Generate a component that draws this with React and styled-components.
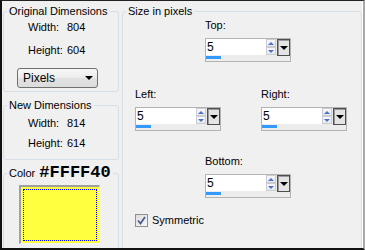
import React from "react";
import styled, { createGlobalStyle } from "styled-components";

const GlobalStyle = createGlobalStyle`
  body {
    margin: 0;
    font-family: "Liberation Sans", Arial, sans-serif;
    font-size: 11px;
    color: #000;
  }
`;

const Frame = styled.div`
  width: 365px;
  height: 250px;
  box-sizing: border-box;
  overflow: hidden;
  background: #f0f0f0;
  border-left: 2px solid #111;
  border-top: 1px solid #222;
  border-bottom: 2px solid #111;
  border-right: 2px solid #a9a9a9;
  box-shadow: inset -1px 0 0 #fff;
  padding-left: 1px;
  display: grid;
  grid-template-columns: 116px 240px;
  column-gap: 3px;
  align-items: start;
`;

const Column = styled.div`
  display: flex;
  flex-direction: column;
`;

const Group = styled.fieldset`
  margin: ${(p) => p.$top || 0}px 0 0 0;
  padding: ${(p) => p.$pad || "0"};
  border: 1px solid #d5dfe5;
  border-radius: 3px;
  min-width: 0;
  height: ${(p) => (p.$height ? `${p.$height}px` : "auto")};
`;

const Legend = styled.legend`
  margin-left: 3px;
  padding: 0 2px;
  line-height: 13px;
  font-size: 11px;
  white-space: nowrap;
`;

const ColorLegend = styled(Legend)`
  line-height: 20px;
  padding: 0 2px;
`;

const Hex = styled.span`
  font-family: "Liberation Mono", "Courier New", monospace;
  font-weight: bold;
  font-size: 17px;
  margin-left: 4px;
`;

const InfoGrid = styled.div`
  display: grid;
  grid-template-columns: 39px auto;
  row-gap: ${(p) => p.$gap}px;
  padding-left: 24px;
  margin-top: ${(p) => p.$top}px;
  line-height: 14px;
`;

const Combo = styled.div`
  width: 81px;
  height: 20px;
  box-sizing: border-box;
  margin: 11px 0 3px 13px;
  border: 1px solid #707070;
  border-radius: 3px;
  background: linear-gradient(#f7f7f7, #ececec 50%, #e2e2e2 50%, #dcdcdc);
  display: flex;
  align-items: center;
  justify-content: space-between;
  padding: 0 4px 0 5px;
  font-size: 12px;
`;

const Caret = styled.span`
  width: 0;
  height: 0;
  border-left: ${(p) => p.$w}px solid transparent;
  border-right: ${(p) => p.$w}px solid transparent;
  border-top: ${(p) => p.$h}px solid ${(p) => p.$color};
  border-bottom: none;
  ${(p) =>
    p.$up &&
    `border-top: none; border-bottom: ${p.$h}px solid ${p.$color};`}
`;

const Swatch = styled.div`
  width: 81px;
  height: 59px;
  box-sizing: border-box;
  margin: 2px 0 0 15px;
  border-top: 2px solid #a0a0a0;
  border-left: 2px solid #a0a0a0;
  border-right: 1px solid #f4f4f4;
  border-bottom: 1px solid #f4f4f4;
  background: #ffff40;
  padding: 2px;
`;

const Focus = styled.div`
  height: 100%;
  box-sizing: border-box;
  border: 1px dotted #0000ff;
`;

const Pane = styled.div`
  display: flex;
  flex-direction: column;
`;

const Field = styled.div`
  display: flex;
  flex-direction: column;
  margin-left: ${(p) => p.$left || 0}px;
  margin-top: ${(p) => p.$top || 0}px;
`;

const Label = styled.div`
  line-height: 14px;
  margin-bottom: 6px;
`;

const PairRow = styled.div`
  display: flex;
  gap: 40px;
  margin-left: 12px;
  margin-top: 25px;
`;

const SpinBox = styled.div`
  width: 86px;
  height: 24px;
  box-sizing: border-box;
  border: 1px solid #b3b3b3;
  background: #ececec;
  display: flex;
  flex-direction: column;
`;

const SpinTop = styled.div`
  display: flex;
  height: 16px;
`;

const Value = styled.div`
  flex: 1;
  background: #fff;
  font-size: 12px;
  line-height: 16px;
  padding-left: 1px;
`;

const Arrows = styled.div`
  width: 10px;
  display: flex;
  flex-direction: column;
  background: #fff;
`;

const ArrowBtn = styled.div`
  flex: 1;
  box-sizing: border-box;
  border: 1px solid #c9ccd4;
  background: linear-gradient(#f8f8f8, #e9e9ec);
  display: flex;
  align-items: center;
  justify-content: center;
`;

const DropBtn = styled.div`
  width: 13px;
  height: 17px;
  box-sizing: border-box;
  margin-left: 1px;
  border: 1px solid #4e4e4e;
  box-shadow: inset 1px 1px 0 #9a9a9a;
  background: #e4e4e4;
  display: flex;
  align-items: center;
  justify-content: center;
`;

const Track = styled.div`
  height: 6px;
  padding-top: 1px;
  box-sizing: border-box;
`;

const Bar = styled.div`
  height: 3px;
  background: #3399ff;
`;

const CheckRow = styled.label`
  display: flex;
  align-items: center;
  gap: 4px;
  margin: 15px 0 0 12px;
  line-height: 14px;
`;

const Box = styled.span`
  width: 13px;
  height: 13px;
  box-sizing: border-box;
  border: 1px solid #8f8f8f;
  background: linear-gradient(135deg, #dcdcdc, #f8f8f8);
  display: flex;
  align-items: center;
  justify-content: center;
`;

const Spin = ({ value, level = 15 }) => (
  <SpinBox>
    <SpinTop>
      <Value>{value}</Value>
      <Arrows>
        <ArrowBtn>
          <Caret $up $w={3} $h={3} $color="#4f72c8" />
        </ArrowBtn>
        <ArrowBtn>
          <Caret $w={3} $h={3} $color="#4f72c8" />
        </ArrowBtn>
      </Arrows>
      <DropBtn>
        <Caret $w={4} $h={4} $color="#000" />
      </DropBtn>
    </SpinTop>
    <Track>
      <Bar style={{ width: level }} />
    </Track>
  </SpinBox>
);

export default function App() {
  return (
    <>
      <GlobalStyle />
      <Frame>
        <Column>
          <Group $top={4}>
            <Legend>Original Dimensions</Legend>
            <InfoGrid $gap={9} $top={2}>
              <span>Width:</span>
              <span>804</span>
              <span>Height:</span>
              <span>604</span>
            </InfoGrid>
            <Combo>
              Pixels
              <Caret $w={4} $h={4} $color="#000" />
            </Combo>
          </Group>
          <Group $top={7} $pad="0 0 9px 0">
            <Legend>New Dimensions</Legend>
            <InfoGrid $gap={6} $top={4}>
              <span>Width:</span>
              <span>814</span>
              <span>Height:</span>
              <span>614</span>
            </InfoGrid>
          </Group>
          <Group $top={3} $height={120}>
            <ColorLegend>
              Color<Hex>#FFFF40</Hex>
            </ColorLegend>
            <Swatch>
              <Focus />
            </Swatch>
          </Group>
        </Column>
        <Group $top={4} $height={300}>
          <Legend>Size in pixels</Legend>
          <Pane>
            <Field $left={82}>
              <Label>Top:</Label>
              <Spin value="5" />
            </Field>
            <PairRow>
              <Field>
                <Label>Left:</Label>
                <Spin value="5" />
              </Field>
              <Field>
                <Label>Right:</Label>
                <Spin value="5" />
              </Field>
            </PairRow>
            <Field $left={82} $top={23}>
              <Label>Bottom:</Label>
              <Spin value="5" />
            </Field>
            <CheckRow>
              <Box>
                <svg width="9" height="9" viewBox="0 0 9 9">
                  <path
                    d="M1 4.5 L3.5 7.5 L8 1"
                    fill="none"
                    stroke="#4a5d8f"
                    strokeWidth="1.8"
                  />
                </svg>
              </Box>
              Symmetric
            </CheckRow>
          </Pane>
        </Group>
      </Frame>
    </>
  );
}
